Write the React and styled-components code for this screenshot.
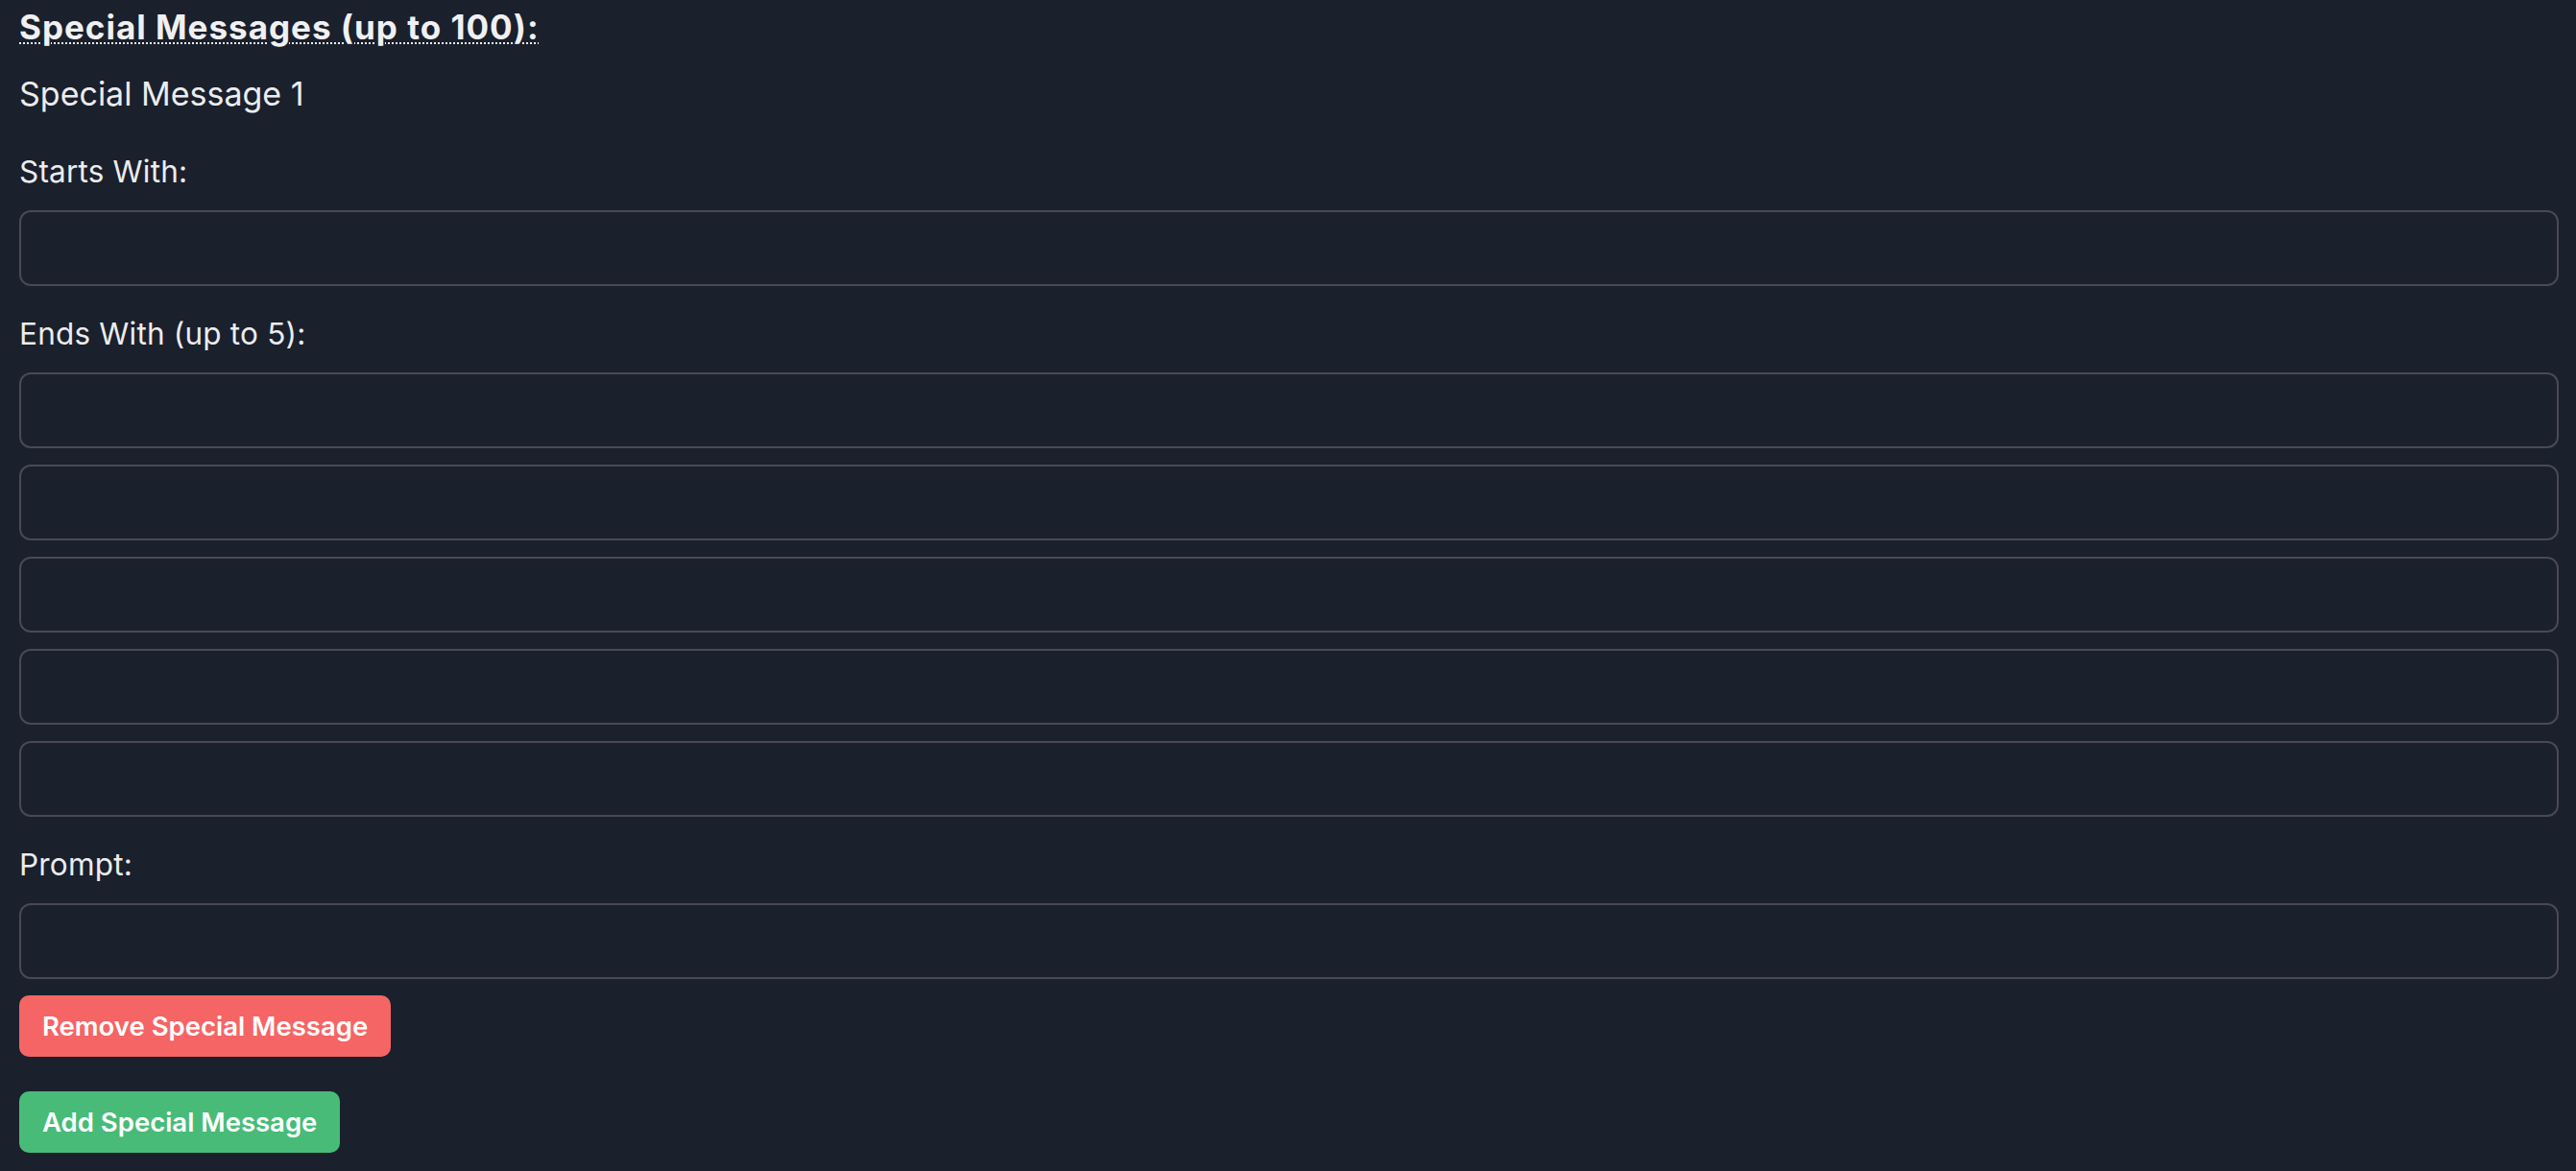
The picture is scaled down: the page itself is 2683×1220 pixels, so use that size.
import styled, { createGlobalStyle } from 'styled-components';

const GlobalStyle = createGlobalStyle`
    html, body {
        margin: 0;
        padding: 0;
        background: #1a202c;
    }
    body {
        font-family: Inter, "Liberation Sans", Arial, sans-serif;
        color: #ececee;
    }
`

const Page = styled.div`
    min-height: 1220px;
    box-sizing: border-box;
    padding: 6px 18px 0 20px;
    background: #1a202c;
`

const Title = styled.h2`
    margin: 0 0 28px;
    font-size: 35px;
    line-height: 44px;
    letter-spacing: 1px;
    font-weight: 700;
    color: #f0f0f2;

    abbr {
        text-decoration: underline dotted;
        text-decoration-thickness: 2px;
        text-underline-offset: 3px;
        cursor: help;
    }
`

const Subtitle = styled.p`
    margin: 0 0 43px;
    font-size: 34px;
    line-height: 40px;
    font-weight: 400;
    color: #ececee;
`

const FieldGroup = styled.div`
    display: flex;
    flex-direction: column;
    gap: 17px;
    margin-bottom: ${(props) => (props.last ? '17px' : '32px')};
`

const Label = styled.label`
    display: block;
    margin-bottom: 5px;
    font-size: 31.5px;
    line-height: 36px;
    letter-spacing: 0.2px;
    color: #ececee;
`

const Input = styled.input`
    display: block;
    width: 100%;
    height: 79px;
    box-sizing: border-box;
    padding: 0 24px;
    border: 2px solid #4a4858;
    border-radius: 12px;
    background: transparent;
    color: #ececee;
    font-family: inherit;
    font-size: 30px;
    outline: none;
`

const Button = styled.button`
    display: flex;
    align-items: center;
    height: 64px;
    padding: 0 24px;
    border: none;
    border-radius: 10px;
    background: ${(props) => props.color};
    color: #ffffff;
    font-family: inherit;
    font-size: 27.5px;
    font-weight: 600;
    cursor: pointer;
    margin-bottom: ${(props) => props.gapBelow || '0'};
`

const App = () => {
    const endsWith = ['', '', '', '', ''];
    return (
        <>
            <GlobalStyle />
            <Page>
                <Title>
                    <abbr title='Special Messages'>Special Messages (up to 100):</abbr>
                </Title>
                <Subtitle>Special Message 1</Subtitle>
                <FieldGroup>
                    <Label>Starts With:</Label>
                    <Input type='text' />
                </FieldGroup>
                <FieldGroup>
                    <Label>Ends With (up to 5):</Label>
                    {endsWith.map((v, i) => (
                        <Input key={i} type='text' defaultValue={v} />
                    ))}
                </FieldGroup>
                <FieldGroup last>
                    <Label>Prompt:</Label>
                    <Input type='text' />
                </FieldGroup>
                <Button color='#f56565' gapBelow='36px'>Remove Special Message</Button>
                <Button color='#48bb78'>Add Special Message</Button>
            </Page>
        </>
    );
}

export default App;
